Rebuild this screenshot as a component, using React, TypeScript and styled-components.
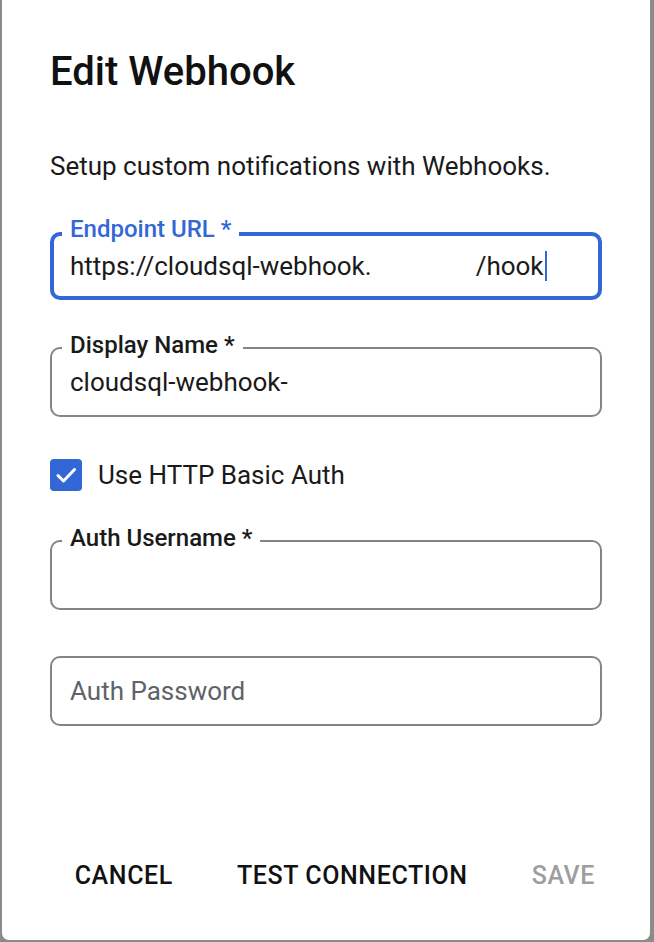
import React from "react";
import styled, { createGlobalStyle } from "styled-components";

const Global = createGlobalStyle`
  html, body {
    margin: 0;
    padding: 0;
    background: #8b8b8b;
  }
  body {
    font-family: Roboto, "Liberation Sans", Arial, sans-serif;
    -webkit-font-smoothing: antialiased;
  }
`;

const Page = styled.div`
  width: 654px;
  height: 942px;
  box-sizing: border-box;
  padding: 0 4px 2px 2px;
`;

const Dialog = styled.div`
  height: 940px;
  background: #ffffff;
  border-radius: 0 0 7px 7px;
  box-sizing: border-box;
  padding: 0 48px 43px 48px;
  display: flex;
  flex-direction: column;
`;

const Title = styled.h2`
  margin: 47px 0 0 0;
  font-size: 40px;
  line-height: 50px;
  font-weight: 500;
  color: #111111;
  letter-spacing: 0;
`;

const Subtitle = styled.p`
  margin: 51px 0 0 0;
  font-size: 26px;
  line-height: 36px;
  color: #1a1a1a;
`;

const Field = styled.div<{ $focused?: boolean; $top: number; $h: number }>`
  position: relative;
  margin-top: ${(p) => p.$top}px;
  height: ${(p) => p.$h}px;
  box-sizing: border-box;
  border: ${(p) => (p.$focused ? "4px solid #3367d6" : "2px solid #80868b")};
  border-radius: 10px;
  display: flex;
  align-items: center;
  padding-left: ${(p) => (p.$focused ? 16 : 18)}px;
`;

const FieldLabel = styled.label<{ $focused?: boolean }>`
  position: absolute;
  top: ${(p) => (p.$focused ? -21 : -18)}px;
  left: ${(p) => (p.$focused ? 8 : 10)}px;
  padding: 0 8px;
  background: #ffffff;
  font-size: 24px;
  line-height: 28px;
  font-weight: 500;
  color: ${(p) => (p.$focused ? "#3367d6" : "#1a1a1a")};
`;

const Value = styled.span`
  font-size: 26px;
  line-height: 34px;
  color: #1a1a1a;
  white-space: pre;
  display: flex;
  align-items: center;
`;

const Redacted = styled.span`
  display: inline-block;
  width: 104px;
`;

const Caret = styled.span`
  display: inline-block;
  width: 2px;
  height: 30px;
  background: #3367d6;
  margin-left: 1px;
`;

const Placeholder = styled.span`
  font-size: 26px;
  line-height: 34px;
  color: #5f6368;
`;

const CheckRow = styled.label`
  margin-top: 42px;
  display: flex;
  align-items: center;
  height: 32px;
  gap: 16px;
  font-size: 26px;
  color: #1a1a1a;
`;

const CheckBox = styled.span`
  width: 32px;
  height: 32px;
  border-radius: 4px;
  background: #3367d6;
  display: flex;
  align-items: center;
  justify-content: center;
`;

const Spacer = styled.div`
  flex: 1;
`;

const Actions = styled.div`
  display: flex;
  justify-content: flex-end;
  align-items: center;
  gap: 36px;
  margin-right: -7px;
`;

const Button = styled.button<{ $disabled?: boolean }>`
  border: none;
  background: transparent;
  padding: 0 14px;
  height: 44px;
  font-family: Roboto, "Liberation Sans", Arial, sans-serif;
  font-size: 25px;
  font-weight: 500;
  letter-spacing: 0.6px;
  text-transform: uppercase;
  color: ${(p) => (p.$disabled ? "#9e9e9e" : "#111111")};
  cursor: pointer;
`;

export default function App() {
  return (
    <>
      <Global />
      <Page>
        <Dialog>
          <Title>Edit Webhook</Title>
          <Subtitle>Setup custom notifications with Webhooks.</Subtitle>

          <Field $focused $top={48} $h={68}>
            <FieldLabel $focused>Endpoint URL *</FieldLabel>
            <Value>
              https://cloudsql-webhook.
              <Redacted />
              /hook
              <Caret />
            </Value>
          </Field>

          <Field $top={47} $h={70}>
            <FieldLabel>Display Name *</FieldLabel>
            <Value>cloudsql-webhook-</Value>
          </Field>

          <CheckRow>
            <CheckBox>
              <svg width="24" height="24" viewBox="0 0 24 24">
                <path
                  d="M4 12.5 L9.5 18 L20.5 6.5"
                  fill="none"
                  stroke="#fff"
                  strokeWidth="3"
                  strokeLinecap="round"
                  strokeLinejoin="round"
                />
              </svg>
            </CheckBox>
            Use HTTP Basic Auth
          </CheckRow>

          <Field $top={49} $h={70}>
            <FieldLabel>Auth Username *</FieldLabel>
          </Field>

          <Field $top={46} $h={70}>
            <Placeholder>Auth Password</Placeholder>
          </Field>

          <Spacer />
          <Actions>
            <Button>Cancel</Button>
            <Button>Test Connection</Button>
            <Button $disabled>Save</Button>
          </Actions>
        </Dialog>
      </Page>
    </>
  );
}
